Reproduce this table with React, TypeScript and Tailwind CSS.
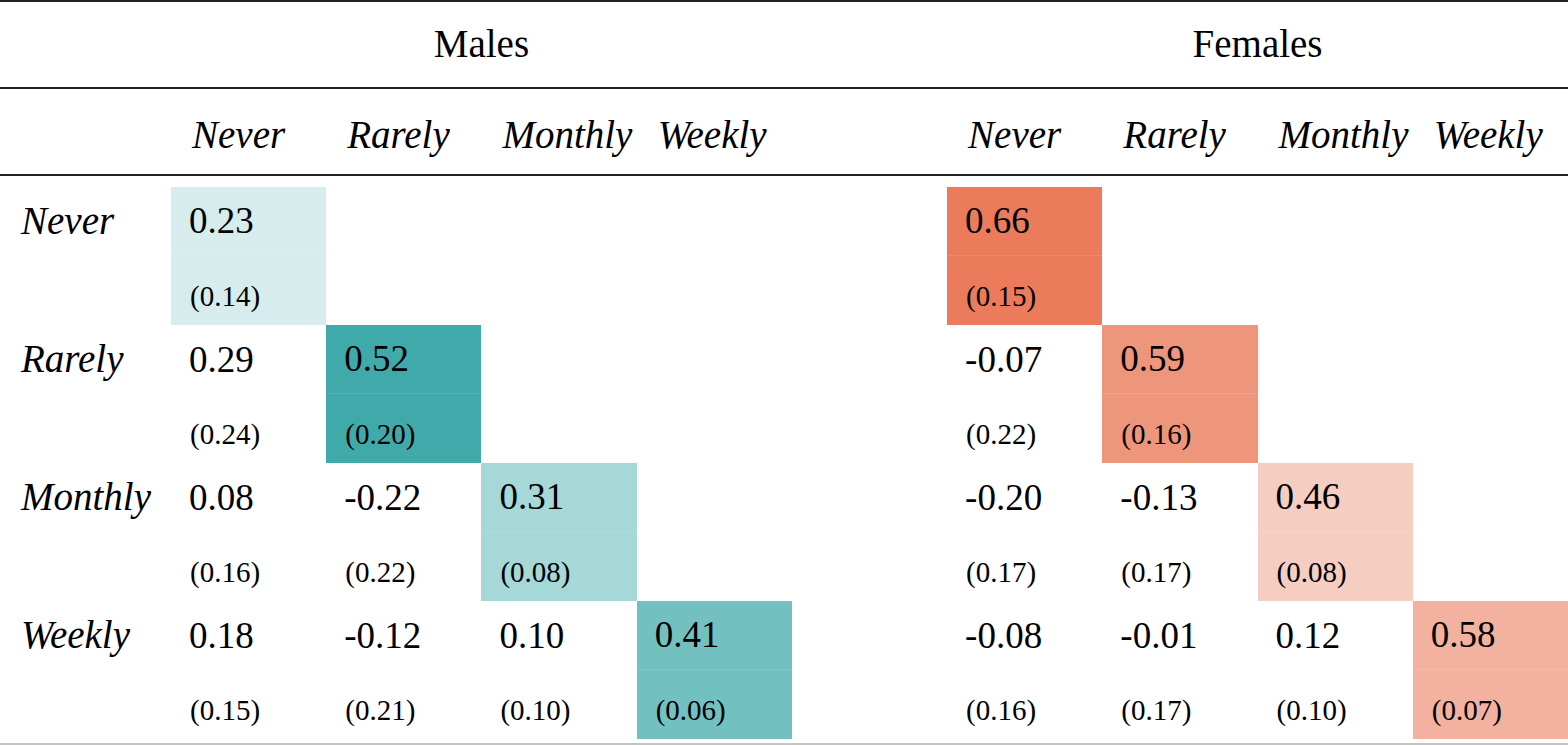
import React from 'react';

type Cell = { v: string; se: string; bg?: string } | null;

const cats = ['Never', 'Rarely', 'Monthly', 'Weekly'];

// lower-triangular correlation blocks, diagonal shaded
const males: Cell[][] = [
  [{ v: '0.23', se: '(0.14)', bg: 'bg-[#d7eded]' }, null, null, null],
  [{ v: '0.29', se: '(0.24)' }, { v: '0.52', se: '(0.20)', bg: 'bg-[#40a9a9]' }, null, null],
  [{ v: '0.08', se: '(0.16)' }, { v: '-0.22', se: '(0.22)' }, { v: '0.31', se: '(0.08)', bg: 'bg-[#a6d8d7]' }, null],
  [
    { v: '0.18', se: '(0.15)' },
    { v: '-0.12', se: '(0.21)' },
    { v: '0.10', se: '(0.10)' },
    { v: '0.41', se: '(0.06)', bg: 'bg-[#73c0c0]' },
  ],
];

const females: Cell[][] = [
  [{ v: '0.66', se: '(0.15)', bg: 'bg-[#eb7b5b]' }, null, null, null],
  [{ v: '-0.07', se: '(0.22)' }, { v: '0.59', se: '(0.16)', bg: 'bg-[#ee967c]' }, null, null],
  [{ v: '-0.20', se: '(0.17)' }, { v: '-0.13', se: '(0.17)' }, { v: '0.46', se: '(0.08)', bg: 'bg-[#f6cdc1]' }, null],
  [
    { v: '-0.08', se: '(0.16)' },
    { v: '-0.01', se: '(0.17)' },
    { v: '0.12', se: '(0.10)' },
    { v: '0.58', se: '(0.07)', bg: 'bg-[#f3b29f]' },
  ],
];

const gridCols = 'grid grid-cols-[171px_repeat(9,minmax(0,1fr))]';

const DataCell = ({ cell }: { cell: Cell }) => {
  if (!cell) return <div className="h-[138px]" />;
  return (
    <div className={`flex flex-col h-[138px] ${cell.bg ?? ''}`}>
      <div className={`h-[69px] flex items-center pl-[18px] text-[37px] ${cell.bg ? 'border-b border-white/10' : ''}`}>
        {cell.v}
      </div>
      <div className="h-[69px] flex items-center pl-[19px] pt-[13px] text-[29px]">{cell.se}</div>
    </div>
  );
};

export default function App() {
  return (
    <div
      className="w-[1568px] h-[745px] bg-white text-black flex flex-col overflow-hidden"
      style={{ fontFamily: '"Liberation Serif", "DejaVu Serif", serif' }}
    >
      <div className="h-[2px] bg-[#222]" />

      <div className={`${gridCols} h-[85px] text-[39px]`}>
        <div />
        <div className="col-span-4 flex items-center justify-center">Males</div>
        <div />
        <div className="col-span-4 flex items-center justify-center">Females</div>
      </div>

      <div className="h-[2px] bg-[#222]" />

      <div className={`${gridCols} h-[85px] text-[39px] italic`}>
        <div />
        {cats.map((c) => (
          <div key={`m-${c}`} className="flex items-center pl-[21px] pt-[8px]">
            {c}
          </div>
        ))}
        <div />
        {cats.map((c) => (
          <div key={`f-${c}`} className="flex items-center pl-[21px] pt-[8px]">
            {c}
          </div>
        ))}
      </div>

      <div className="h-[2px] bg-[#222]" />

      <div className="pt-[11px] flex flex-col">
        {cats.map((row, i) => (
          <div key={row} className={gridCols}>
            <div className="h-[138px]">
              <div className="h-[69px] flex items-center pl-[21px] italic text-[39px]">{row}</div>
            </div>
            {males[i].map((cell, j) => (
              <DataCell key={`m-${j}`} cell={cell} />
            ))}
            <div />
            {females[i].map((cell, j) => (
              <DataCell key={`f-${j}`} cell={cell} />
            ))}
          </div>
        ))}
      </div>

      <div className="mt-[4px] h-[2px] bg-[#c4c4c4]" />
    </div>
  );
}
